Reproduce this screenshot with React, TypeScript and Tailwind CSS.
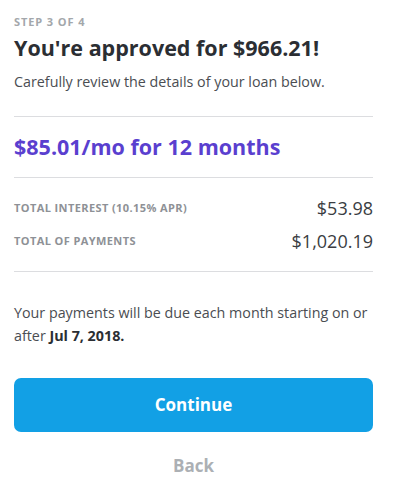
export default function App() {
  return (
    <div className="w-[400px] h-[491px] bg-white px-[14px] pt-[15px] text-[#2d3035]" style={{ fontFamily: "'Open Sans', sans-serif" }}>
      <div className="w-[359px]">
        <div className="text-[11px] font-bold tracking-[0.9px] text-[#a3a7ab] leading-[14px]">STEP 3 OF 4</div>
        <h1 className="mt-[5px] text-[21.5px] font-bold leading-[28px] text-[#2b2e33]">You're approved for $966.21!</h1>
        <p className="mt-[10px] text-[14.3px] leading-[20px] text-[#4a4d52]">Carefully review the details of your loan below.</p>
        <div className="mt-[24px] border-t border-[#dcdde0]" />
        <div className="pt-[16px] pb-[16px] text-[21.5px] font-bold leading-[28px] text-[#5a3fcf]">$85.01/mo for 12 months</div>
        <div className="border-t border-[#dcdde0]" />
        <div className="pt-[19px] pb-[18px] flex flex-col gap-[10px]">
          <div className="flex items-center justify-between h-[23px]">
            <span className="text-[11px] font-bold tracking-[0.4px] text-[#8e9196]">TOTAL INTEREST (10.15% APR)</span>
            <span className="text-[18px] text-[#3a3d42]">$53.98</span>
          </div>
          <div className="flex items-center justify-between h-[23px]">
            <span className="text-[11px] font-bold tracking-[0.4px] text-[#8e9196]">TOTAL OF PAYMENTS</span>
            <span className="text-[18px] text-[#3a3d42]">$1,020.19</span>
          </div>
        </div>
        <div className="border-t border-[#dcdde0]" />
        <p className="mt-[29px] text-[14.3px] leading-[23px] text-[#4a4d52]">
          <span>Your payments will be due each month starting on or</span>
          <br />
          <span>after </span>
          <strong className="font-bold text-[#2b2e33]">Jul 7, 2018.</strong>
        </p>
        <button className="mt-[31px] w-full h-[54px] rounded-[7px] bg-[#12a0e5] text-white text-[17px] font-bold">Continue</button>
        <div className="mt-[21px] text-center text-[17px] font-bold text-[#acb0b4]">Back</div>
      </div>
    </div>
  );
}
